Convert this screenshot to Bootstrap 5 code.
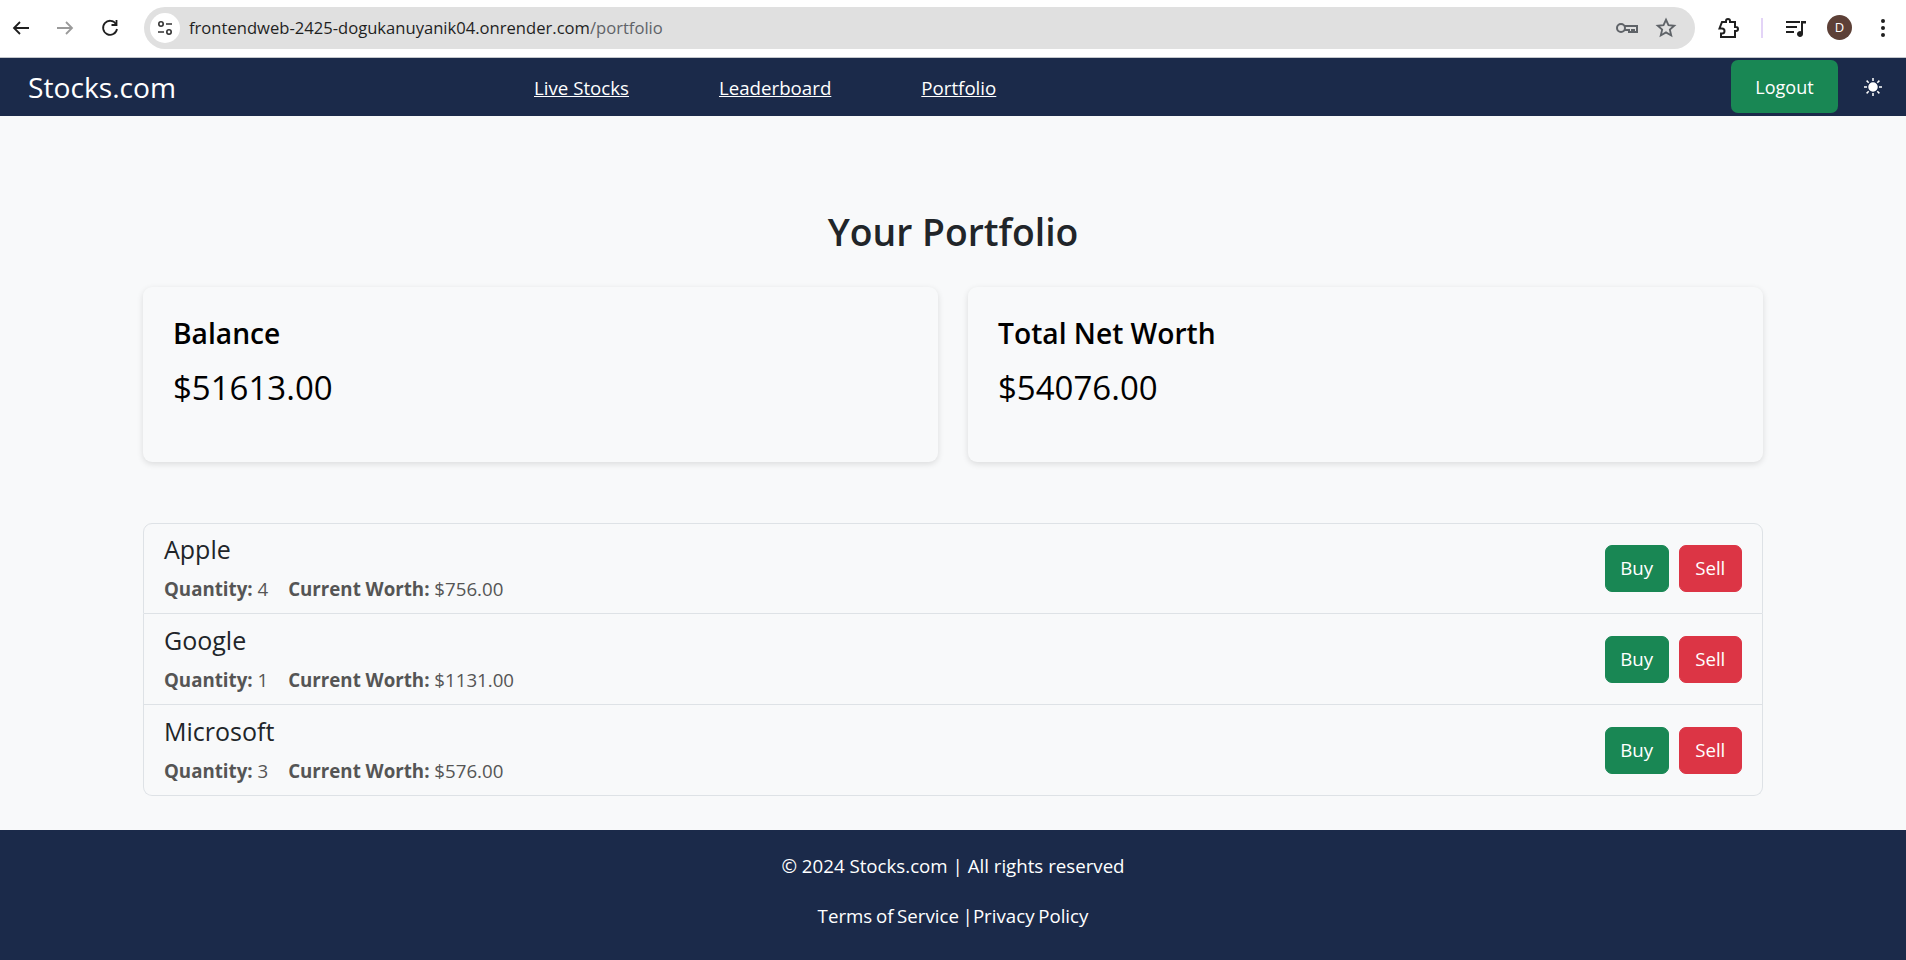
<!DOCTYPE html>
<html lang="en">
<head>
    <meta charset="UTF-8">
    <meta name="viewport" content="width=device-width, initial-scale=1.0">
    <title>Stocks.com</title>
    <link href="https://cdn.jsdelivr.net/npm/bootstrap@5.3.0/dist/css/bootstrap.min.css" rel="stylesheet">
    <style>
    html, body {
        height: 100%;
    }
    body {
        background-color: #f8f9fa;
        font-family: "Open Sans", "Noto Sans", sans-serif;
        font-size: 18px;
        color: #212529;
        overflow: hidden;
    }
    .browser-bar {
        height: 58px;
        background: #fff;
        border-bottom: 1px solid #c4c7cc;
        padding: 7px 0 9px 0;
    }
    .tool-icon {
        width: 24px;
        height: 24px;
        color: #1f1f1f;
        flex: none;
    }
    .icon-back { margin-left: 9px; }
    .icon-fwd { margin-left: 20px; }
    .icon-reload { margin-left: 21px; }
    .url-box {
        width: 1551px;
        height: 42px;
        margin-left: 22px;
        border-radius: 21px;
        background: #e0e0e0;
        padding: 0 18px 0 6px;
    }
    .site-chip {
        width: 30px;
        height: 30px;
        border-radius: 50%;
        background: #fff;
        flex: none;
    }
    .url-text {
        font-size: 16.6px;
        color: #1f1f1f;
        margin-left: 9px;
        padding-top: 1px;
    }
    .url-text span {
        color: #5f6368;
    }
    .icon-star { margin-left: 17px; }
    .icon-ext { margin-left: 21px; }
    .bar-split {
        width: 2px;
        height: 20px;
        background: #e3d4f7;
        margin-left: 21px;
    }
    .icon-music { margin-left: 21px; }
    .avatar {
        width: 25px;
        height: 25px;
        border-radius: 50%;
        background: #5d4037;
        color: #fff;
        font-size: 13px;
        margin-left: 19px;
    }
    .icon-more { margin-left: 19px; }
    .top-nav {
        height: 58px;
        background: #1b2a4a;
        padding: 0 20px 0 28px;
        color: #fff;
    }
    .brand-name {
        width: 506px;
        font-size: 28.2px;
        color: #fff;
        text-decoration: none;
    }
    .nav-links {
        gap: 90px;
        padding-top: 2px;
    }
    .nav-links a {
        color: #fff;
        font-size: 18.7px;
    }
    .logout-btn {
        width: 107px;
        height: 53px;
        margin-bottom: 2px;
        padding: 2px 0 0 0;
        font-size: 18px;
        border-radius: 7px;
        border: 0;
    }
    .theme-icon {
        width: 20px;
        height: 20px;
        margin-left: 25px;
        margin-right: 3px;
    }
    .page-main {
        width: 1620px;
        margin: 0 auto;
        padding-top: 92px;
    }
    .page-title {
        font-size: 37.3px;
        font-weight: 600;
        text-align: center;
        margin: 0 0 31px 0;
        line-height: 48px;
        height: 48px;
    }
    .stat-row {
        gap: 30px;
    }
    .stat-box {
        flex: 1 1 0;
        height: 175px;
        padding: 28px 30px 30px;
        background: #f8f9fa;
        border: 0;
        border-radius: 9px;
        box-shadow: 0 2px 6px rgba(0, 0, 0, .12);
    }
    .stat-box h3 {
        font-size: 28.2px;
        font-weight: 600;
        color: #000;
        margin: 0 0 15px 0;
        line-height: 36px;
    }
    .stat-box p {
        font-size: 33px;
        color: #000;
        margin: 0;
        line-height: 44px;
    }
    .stock-list {
        margin-top: 61px;
        border-radius: 9px;
    }
    .stock-list .list-group-item {
        height: 91px;
        padding: 0 20px;
        background: #f8f9fa;
        border-color: #dee2e6;
    }
    .stock-text {
        padding-bottom: 2px;
    }
    .stock-name {
        font-size: 25px;
        font-weight: 500;
        line-height: 32px;
        margin: 0 0 11px 0;
    }
    .stock-info {
        font-size: 18.7px;
        line-height: 26px;
        color: #555;
    }
    .stock-info span + span {
        margin-left: 20px;
    }
    .act-group {
        gap: 10px;
    }
    .act-btn {
        width: 63.5px;
        height: 47px;
        padding: 0;
        font-size: 18.7px;
        border-radius: 7px;
    }
    .page-foot {
        height: 130px;
        margin-top: 34px;
        background: #1b2a4a;
        color: #fff;
        text-align: center;
        font-size: 18.7px;
        padding-top: 23px;
    }
    .page-foot p {
        margin: 0 0 24px 0;
        line-height: 26px;
    }
    .page-foot a {
        color: #fff;
        text-decoration: none;
    }
    .foot-links {
        word-spacing: -1.2px;
    }
    </style>
</head>
<body>
    <div class="browser-bar d-flex align-items-center">
        <svg class="tool-icon icon-back" viewBox="0 0 24 24" fill="none" stroke="currentColor" stroke-width="1.8"><path d="M20 12H5M11 6l-6 6 6 6"/></svg>
        <svg class="tool-icon icon-fwd" viewBox="0 0 24 24" fill="none" stroke="#9a9a9a" stroke-width="1.8"><path d="M4 12h15M13 6l6 6-6 6"/></svg>
        <svg class="tool-icon icon-reload" viewBox="0 0 24 24" fill="none" stroke="currentColor" stroke-width="1.8"><path d="M18 8A7 7 0 1 0 19 13"/><path d="M18.500 4v5h-5"/></svg>
        <div class="url-box d-flex align-items-center">
            <div class="site-chip d-flex align-items-center justify-content-center">
                <svg width="18" height="18" viewBox="0 0 18 18" fill="none" stroke="#333" stroke-width="1.6"><circle cx="5" cy="5" r="2.2"/><path d="M10 5h6M2 13h6"/><circle cx="13" cy="13" r="2.2"/></svg>
            </div>
            <div class="url-text">frontendweb-2425-dogukanuyanik04.onrender.com<span>/portfolio</span></div>
            <svg class="ms-auto" width="24" height="24" viewBox="0 0 24 24" fill="none" stroke="#5f6368" stroke-width="2"><circle cx="7" cy="12" r="4"/><path d="M11 10h12v6h-3v-2h-2v2h-3v-2h-4"/></svg>
            <svg class="icon-star" width="22" height="22" viewBox="0 0 24 24" fill="none" stroke="#5f6368" stroke-width="2"><path d="M12 3l2.700 6 6.300.6-4.800 4.200 1.500 6.300L12 16.800l-5.700 3.300 1.500-6.300L3 9.600 9.300 9z"/></svg>
        </div>
        <svg class="tool-icon icon-ext" viewBox="0 0 24 24" fill="none" stroke="currentColor" stroke-width="2"><path d="M6 6h4V5a2 2 0 0 1 4 0v1h5v5h1a2 2 0 0 1 0 4h-1v6H5v-3.500h1a2.500 2.500 0 0 0 0-5H3.500z"/></svg>
        <div class="bar-split"></div>
        <svg class="tool-icon icon-music" viewBox="0 0 24 24" fill="currentColor"><path d="M2 5h14v2H2zM2 10h11v2H2zM2 15h8v2H2z"/><path d="M17 5h5v2.500h-3V18a3 3 0 1 1-2-2.800z"/></svg>
        <div class="avatar d-flex align-items-center justify-content-center">D</div>
        <svg class="tool-icon icon-more" viewBox="0 0 24 24" fill="currentColor"><circle cx="12" cy="5" r="2"/><circle cx="12" cy="12" r="2"/><circle cx="12" cy="19" r="2"/></svg>
    </div>

    <nav class="top-nav d-flex align-items-center">
        <a class="brand-name" href="#">Stocks.com</a>
        <div class="nav-links d-flex">
            <a href="#">Live Stocks</a>
            <a href="#">Leaderboard</a>
            <a href="#">Portfolio</a>
        </div>
        <button class="btn btn-success logout-btn ms-auto" type="button">Logout</button>
        <svg class="theme-icon" viewBox="0 0 20 20" fill="#fff" stroke="#fff" stroke-width="1.5"><circle cx="10" cy="10" r="4"/><path d="M10 1v3M10 16v3M1 10h3M16 10h3M3.600 3.600l2.100 2.100M14.300 14.300l2.100 2.100M3.600 16.400l2.100-2.100M14.300 5.700l2.100-2.100"/></svg>
    </nav>

    <main class="page-main">
        <h1 class="page-title">Your Portfolio</h1>
        <div class="stat-row d-flex">
            <div class="stat-box card">
                <h3>Balance</h3>
                <p>$51613.00</p>
            </div>
            <div class="stat-box card">
                <h3>Total Net Worth</h3>
                <p>$54076.00</p>
            </div>
        </div>

        <ul class="stock-list list-group">
            <li class="list-group-item d-flex justify-content-between align-items-center">
                <div class="stock-text">
                    <div class="stock-name">Apple</div>
                    <div class="stock-info"><span><strong>Quantity:</strong> 4</span><span><strong>Current Worth:</strong> $756.00</span></div>
                </div>
                <div class="act-group d-flex">
                    <button class="btn btn-success act-btn" type="button">Buy</button>
                    <button class="btn btn-danger act-btn" type="button">Sell</button>
                </div>
            </li>
            <li class="list-group-item d-flex justify-content-between align-items-center">
                <div class="stock-text">
                    <div class="stock-name">Google</div>
                    <div class="stock-info"><span><strong>Quantity:</strong> 1</span><span><strong>Current Worth:</strong> $1131.00</span></div>
                </div>
                <div class="act-group d-flex">
                    <button class="btn btn-success act-btn" type="button">Buy</button>
                    <button class="btn btn-danger act-btn" type="button">Sell</button>
                </div>
            </li>
            <li class="list-group-item d-flex justify-content-between align-items-center">
                <div class="stock-text">
                    <div class="stock-name">Microsoft</div>
                    <div class="stock-info"><span><strong>Quantity:</strong> 3</span><span><strong>Current Worth:</strong> $576.00</span></div>
                </div>
                <div class="act-group d-flex">
                    <button class="btn btn-success act-btn" type="button">Buy</button>
                    <button class="btn btn-danger act-btn" type="button">Sell</button>
                </div>
            </li>
        </ul>
    </main>

    <footer class="page-foot">
        <p>© 2024 Stocks.com | All rights reserved</p>
        <p class="foot-links"><a href="#">Terms of Service</a> |<a href="#">Privacy Policy</a></p>
    </footer>
    <script src="https://cdn.jsdelivr.net/npm/bootstrap@5.3.0/dist/js/bootstrap.bundle.min.js"></script>
</body>
</html>
